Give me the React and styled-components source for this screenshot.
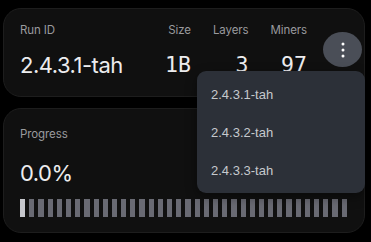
import React from "react";
import styled, { createGlobalStyle } from "styled-components";

const Global = createGlobalStyle`
  html, body { margin: 0; padding: 0; background: #000; }
  body { font-family: Inter, "Noto Sans", sans-serif; -webkit-font-smoothing: antialiased; }
`;

const Page = styled.div`
  position: relative;
  width: 362px;
  margin-left: 3px;
  padding-top: 8px;
  display: flex;
  flex-direction: column;
  gap: 11px;
`;

const Card = styled.div`
  position: relative;
  box-sizing: border-box;
  height: ${(p) => p.$h}px;
  background: #101010;
  border: 1px solid #1d1d1d;
  border-radius: 18px;
  padding: ${(p) => p.$top}px 17px 0 16px;
`;

const RunRow = styled.div`
  display: flex;
  justify-content: space-between;
  margin-right: 40px;
`;

const Col = styled.div`
  display: flex;
  flex-direction: column;
  align-items: ${(p) => (p.$right ? "flex-end" : "flex-start")};
`;

const Label = styled.div`
  font-size: 11.5px;
  line-height: 16px;
  letter-spacing: -0.1px;
  color: #9a9a9e;
`;

const BigValue = styled.div`
  margin-top: ${(p) => p.$gap}px;
  font-size: 22px;
  line-height: 28px;
  color: #ececee;
  letter-spacing: -0.5px;
`;

const MonoValue = styled.div`
  margin-top: 13px;
  font-family: "DejaVu Sans Mono", monospace;
  font-size: 21.5px;
  line-height: 28px;
  color: #ececee;
`;

const Stats = styled.div`
  display: flex;
  gap: 22px;
`;

const KebabButton = styled.button`
  position: absolute;
  top: 23px;
  right: 2px;
  width: 39px;
  height: 35px;
  border-radius: 50%;
  border: none;
  background: #4a4e57;
  display: flex;
  align-items: center;
  justify-content: center;
  padding: 0;
`;

const Bars = styled.div`
  display: flex;
  gap: 4px;
  height: 18px;
  margin-top: 12px;
`;

const Bar = styled.div`
  flex: 1;
  background: ${(p) => (p.$done ? "#c6c7cc" : "#696a73")};
`;

const Menu = styled.div`
  position: absolute;
  left: 194px;
  top: 71px;
  width: 168px;
  box-sizing: border-box;
  padding: 4px 0;
  background: #2c3038;
  border-radius: 9px;
  box-shadow: 0 4px 12px rgba(0, 0, 0, 0.4);
`;

const MenuItem = styled.div`
  height: 38px;
  display: flex;
  align-items: center;
  padding-left: 14px;
  font-family: "Liberation Sans", Arial, sans-serif;
  font-size: 13px;
  color: #c6c9ce;
`;

export default function App() {
  const stats = [
    ["Size", "1B"],
    ["Layers", "3"],
    ["Miners", "97"],
  ];
  return (
    <>
      <Global />
      <Page>
        <Card $h={89} $top={13}>
          <RunRow>
            <Col>
              <Label>Run ID</Label>
              <BigValue $gap={13}>2.4.3.1-tah</BigValue>
            </Col>
            <Stats>
              {stats.map(([l, v]) => (
                <Col key={l} $right>
                  <Label>{l}</Label>
                  <MonoValue>{v}</MonoValue>
                </Col>
              ))}
            </Stats>
          </RunRow>
          <KebabButton aria-label="More">
            <svg width="4" height="16" viewBox="0 0 4 16">
              <circle cx="2" cy="2" r="1.5" fill="#fff" />
              <circle cx="2" cy="8" r="1.5" fill="#fff" />
              <circle cx="2" cy="14" r="1.5" fill="#fff" />
            </svg>
          </KebabButton>
        </Card>
        <Card $h={125} $top={17}>
          <Label>Progress</Label>
          <BigValue $gap={17}>0.0%</BigValue>
          <Bars>
            {Array.from({ length: 36 }).map((_, i) => (
              <Bar key={i} $done={i === 0} />
            ))}
          </Bars>
        </Card>
        <Menu>
          <MenuItem>2.4.3.1-tah</MenuItem>
          <MenuItem>2.4.3.2-tah</MenuItem>
          <MenuItem>2.4.3.3-tah</MenuItem>
        </Menu>
      </Page>
    </>
  );
}
